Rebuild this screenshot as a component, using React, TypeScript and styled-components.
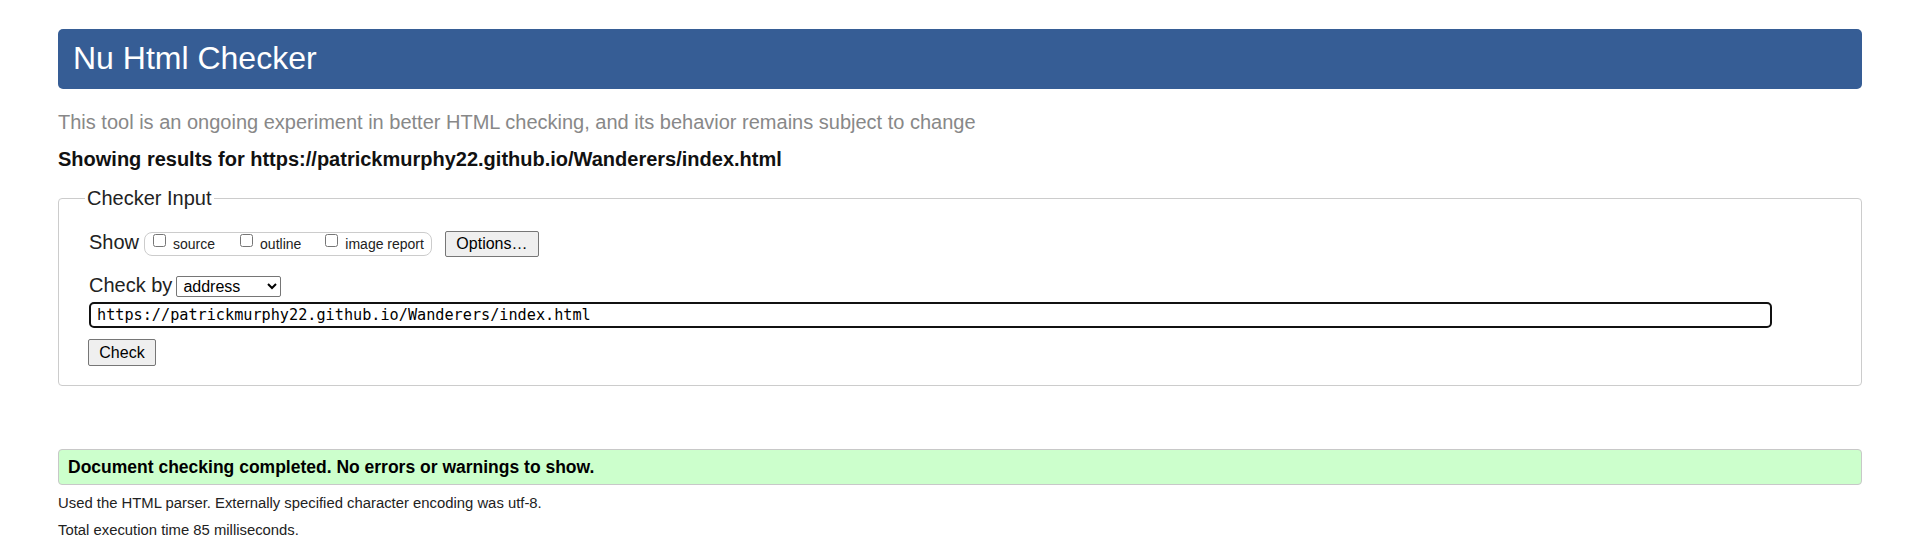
import React from "react";
import styled, { createGlobalStyle } from "styled-components";

const Global = createGlobalStyle`
  html, body { margin: 0; padding: 0; background: #fff; }
  body { font-family: "Liberation Sans", Arial, sans-serif; color: #111; }
`;

const Page = styled.div`
  padding: 29px 58px 0;
`;

const Title = styled.h1`
  margin: 0;
  height: 60px;
  line-height: 59px;
  padding: 0 15px;
  background: #365d95;
  color: #fff;
  font-weight: normal;
  font-size: 32px;
  border-radius: 5px;
`;

const Subtitle = styled.p`
  margin: 21px 0 0;
  font-size: 20px;
  line-height: 24px;
  color: #888;
`;

const Results = styled.p`
  margin: 13px 0 0;
  font-size: 20px;
  line-height: 24px;
  font-weight: bold;
  color: #111;
`;

const InputFieldset = styled.fieldset`
  margin: 16px 0 0;
  padding: 0 30px 19px;
  border: 1px solid #ccc;
  border-radius: 4px;
  min-width: 0;
`;

const Legend = styled.legend`
  font-size: 20px;
  line-height: 22px;
  padding: 0 2px;
  margin-left: -4px;
  color: #222;
`;

const Row = styled.div<{ $top: number }>`
  display: flex;
  align-items: flex-start;
  margin-top: ${(p) => p.$top}px;
`;

const Label = styled.span<{ $gap: number }>`
  font-size: 20px;
  line-height: 22px;
  color: #222;
  margin-right: ${(p) => p.$gap}px;
`;

const Group = styled.fieldset`
  display: flex;
  align-items: center;
  margin: 1px 13px 0 0;
  padding: 0 7px 0 8px;
  height: 24px;
  box-sizing: border-box;
  border: 1px solid #ccc;
  border-radius: 8px;
  min-width: 0;
`;

const CheckLabel = styled.label<{ $gap: number }>`
  display: flex;
  align-items: center;
  height: 20px;
  font-size: 14px;
  line-height: 16px;
  color: #222;
  white-space: nowrap;
  margin-right: ${(p) => p.$gap}px;
`;

const Box = styled.input`
  width: 13px;
  height: 13px;
  margin: 0 7px 7px 0;
`;

const Button = styled.button<{ $w: number; $h: number }>`
  font-family: "Liberation Sans", Arial, sans-serif;
  font-size: 16px;
  height: ${(p) => p.$h}px;
  width: ${(p) => p.$w}px;
  padding: 0;
  background: #efefef;
  border: 1px solid #767676;
  border-radius: 2px;
  color: #000;
`;

const Select = styled.select`
  font-family: "Liberation Sans", Arial, sans-serif;
  font-size: 16px;
  width: 105px;
  height: 21px;
  margin-top: 2px;
  padding: 0 0 0 2px;
  border: 1px solid #767676;
  border-radius: 2px;
  background: #fff;
  color: #000;
`;

const UrlInput = styled.input`
  display: block;
  box-sizing: border-box;
  margin-top: 5px;
  width: 1683px;
  height: 26px;
  padding: 0 6px;
  border: 2px solid #111;
  border-radius: 5px;
  font-family: "DejaVu Sans Mono", "Liberation Mono", monospace;
  font-size: 15.2px;
  color: #000;
  outline: none;
`;

const ButtonRow = styled.div`
  margin-top: 11px;
  margin-left: -1px;
  display: flex;
`;

const Success = styled.p`
  margin: 63px 0 0;
  height: 36px;
  box-sizing: border-box;
  padding: 0 9px;
  line-height: 34px;
  background: #ccffcc;
  border: 1px solid #c8c8c8;
  border-radius: 4px;
  font-weight: bold;
  font-size: 17.5px;
  color: #000;
`;

const Note = styled.p<{ $top: number }>`
  margin: ${(p) => p.$top}px 0 0;
  font-size: 14.85px;
  line-height: 18px;
  color: #222;
`;

export default function App() {
  return (
    <Page>
      <Global />
      <Title>Nu Html Checker</Title>
      <Subtitle>
        This tool is an ongoing experiment in better HTML checking, and its behavior remains subject to change
      </Subtitle>
      <Results>Showing results for https://patrickmurphy22.github.io/Wanderers/index.html</Results>
      <InputFieldset>
        <Legend>Checker Input</Legend>
        <Row $top={22}>
          <Label $gap={5}>Show</Label>
          <Group>
            <CheckLabel $gap={25}>
              <Box type="checkbox" />
              source
            </CheckLabel>
            <CheckLabel $gap={24}>
              <Box type="checkbox" />
              outline
            </CheckLabel>
            <CheckLabel $gap={0}>
              <Box type="checkbox" />
              image report
            </CheckLabel>
          </Group>
          <Button type="button" $w={94} $h={26}>
            Options…
          </Button>
        </Row>
        <Row $top={17}>
          <Label $gap={4}>Check by</Label>
          <Select defaultValue="address">
            <option value="address">address</option>
            <option value="upload">file upload</option>
            <option value="text">text input</option>
          </Select>
        </Row>
        <UrlInput type="url" defaultValue="https://patrickmurphy22.github.io/Wanderers/index.html" />
        <ButtonRow>
          <Button type="button" $w={68} $h={27}>
            Check
          </Button>
        </ButtonRow>
      </InputFieldset>
      <Success>Document checking completed. No errors or warnings to show.</Success>
      <Note $top={9}>Used the HTML parser. Externally specified character encoding was utf-8.</Note>
      <Note $top={9}>Total execution time 85 milliseconds.</Note>
    </Page>
  );
}
